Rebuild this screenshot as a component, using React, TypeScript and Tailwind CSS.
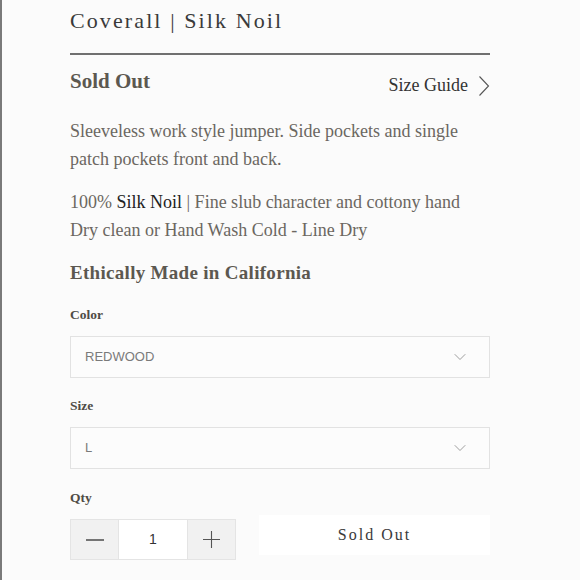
import { ChevronDown } from "lucide-react";

const serif = { fontFamily: '"Liberation Serif", "Times New Roman", serif' };

function Select({ value }: { value: string }) {
  return (
    <div className="mt-[11px] flex h-[42px] items-center justify-between border border-[#e2e2e2] bg-[#fcfcfc] pl-[14px] pr-[19px]">
      <span className="text-[13px] text-[#7a7a7a]" style={{ fontFamily: '"Liberation Sans", Arial, sans-serif' }}>
        {value}
      </span>
      <ChevronDown className="h-[20px] w-[20px] text-[#8a8a8a]" strokeWidth={1} />
    </div>
  );
}

export default function App() {
  return (
    <main className="min-h-[580px] w-[580px] border-l-2 border-[#7a7a7a] bg-[#fbfbfb]" style={serif}>
      <div className="ml-[68px] w-[420px] pt-[6px]">
        {/* Header */}
        <h1 className="text-[22px] leading-[30px] tracking-[2.1px] text-[#3a3a3a]">Coverall | Silk Noil</h1>
        <div className="mt-[17px] h-[2px] bg-[#707070]" />

        <div className="mt-[9px] flex h-[33px] items-center justify-between">
          <span className="text-[21px] font-bold leading-[28px] text-[#5c5850]">Sold Out</span>
          <a className="flex translate-y-[5px] items-center gap-[10px] text-[18px] leading-[27px] text-[#333]">
            Size Guide
            <svg width="12" height="22" viewBox="0 0 12 22" fill="none" stroke="#555" strokeWidth="1.1">
              <path d="M1.5 1.5 L10.5 11 L1.5 20.5" />
            </svg>
          </a>
        </div>

        {/* Description */}
        <p className="mt-[20px] text-[18px] leading-[28px] text-[#6b6761]">
          Sleeveless work style jumper. Side pockets and single patch pockets front and back.
        </p>
        <p className="mt-[15px] text-[18px] leading-[28px] text-[#6b6761]">
          100% <span className="text-[#222]">Silk Noil</span> | Fine slub character and cottony hand
          <br />
          Dry clean or Hand Wash Cold - Line Dry
        </p>
        <h2 className="mt-[15px] text-[19px] font-bold leading-[28px] tracking-[0.3px] text-[#5c5850]">
          Ethically Made in California
        </h2>

        {/* Options */}
        <div className="mt-[18px] text-[13.5px] font-bold leading-[20px] text-[#4f4b45]">Color</div>
        <Select value="REDWOOD" />

        <div className="mt-[18px] text-[13.5px] font-bold leading-[20px] text-[#4f4b45]">Size</div>
        <Select value="L" />

        <div className="mt-[19px] text-[13.5px] font-bold leading-[20px] text-[#4f4b45]">Qty</div>
        <div className="mt-[7px] flex items-start justify-between">
          <div className="mt-[4px] flex h-[41px] border border-[#e4e4e4]">
            <button className="flex w-[47px] items-center justify-center bg-[#f1f1f1]">
              <svg width="20" height="4" viewBox="0 0 20 4" stroke="#555" strokeWidth="1.6">
                <path d="M1 2 H19" />
              </svg>
            </button>
            <div
              className="flex w-[70px] items-center justify-center border-x border-[#e4e4e4] bg-white text-[14px] text-[#333]"
              style={{ fontFamily: '"Liberation Sans", Arial, sans-serif' }}
            >
              1
            </div>
            <button className="flex w-[47px] items-center justify-center bg-[#f1f1f1]">
              <svg width="19" height="19" viewBox="0 0 19 19" stroke="#555" strokeWidth="1.1">
                <path d="M1 9.5 H18 M9.5 1 V18" />
              </svg>
            </button>
          </div>
          <button className="h-[40px] w-[231px] bg-white text-[16px] tracking-[2px] text-[#3a3a3a]">Sold Out</button>
        </div>
      </div>
    </main>
  );
}
